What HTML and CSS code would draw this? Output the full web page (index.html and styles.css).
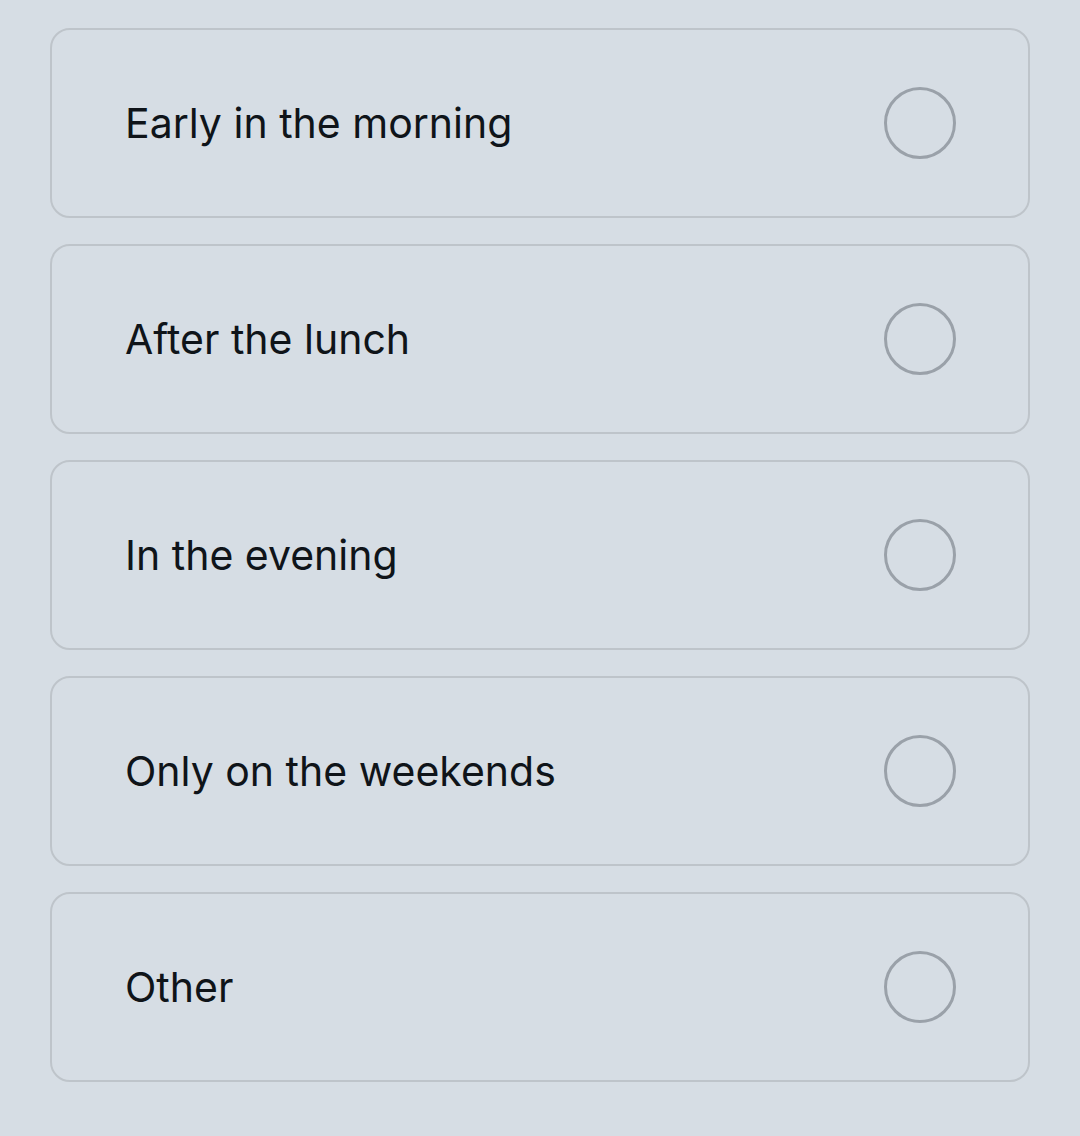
FILE: index.html
```html
<!DOCTYPE html>
<html lang="en">
<head>
    <meta charset="UTF-8">
    <meta name="viewport" content="width=device-width, initial-scale=1.0">
    <title>When do you work out?</title>
    <link rel="stylesheet" href="styles.css">
</head>
<body>

<div class="options">
    <label class="option">
        <span class="option-text">Early in the morning</span>
        <input type="radio" name="time" class="option-radio">
    </label>
    <label class="option">
        <span class="option-text">After the lunch</span>
        <input type="radio" name="time" class="option-radio">
    </label>
    <label class="option">
        <span class="option-text">In the evening</span>
        <input type="radio" name="time" class="option-radio">
    </label>
    <label class="option">
        <span class="option-text">Only on the weekends</span>
        <input type="radio" name="time" class="option-radio">
    </label>
    <label class="option">
        <span class="option-text">Other</span>
        <input type="radio" name="time" class="option-radio">
    </label>
</div>

</body>
</html>
```

FILE: styles.css
```css
* {
    margin: 0;
    padding: 0;
    box-sizing: border-box;
}
body {
    font-family: 'Inter', 'Noto Sans', sans-serif;
    background-color: #d6dde4;
    padding: 28px 50px;
    min-height: 100vh;
    color: #0f1419;
}
.options {
    display: flex;
    flex-direction: column;
    gap: 26px;
}
.option {
    display: flex;
    align-items: center;
    justify-content: space-between;
    height: 190px;
    padding: 0 72px 0 73px;
    border: 2px solid #bec4ca;
    border-radius: 20px;
    cursor: pointer;
}
.option-text {
    font-size: 41px;
    line-height: 1;
}
.option-radio {
    appearance: none;
    -webkit-appearance: none;
    width: 72px;
    height: 72px;
    border: 3px solid #9aa1a9;
    border-radius: 50%;
    background: transparent;
    cursor: pointer;
}
.option-radio:checked {
    border-color: #0f1419;
    background: radial-gradient(circle, #0f1419 0 40%, transparent 42%);
}
```
